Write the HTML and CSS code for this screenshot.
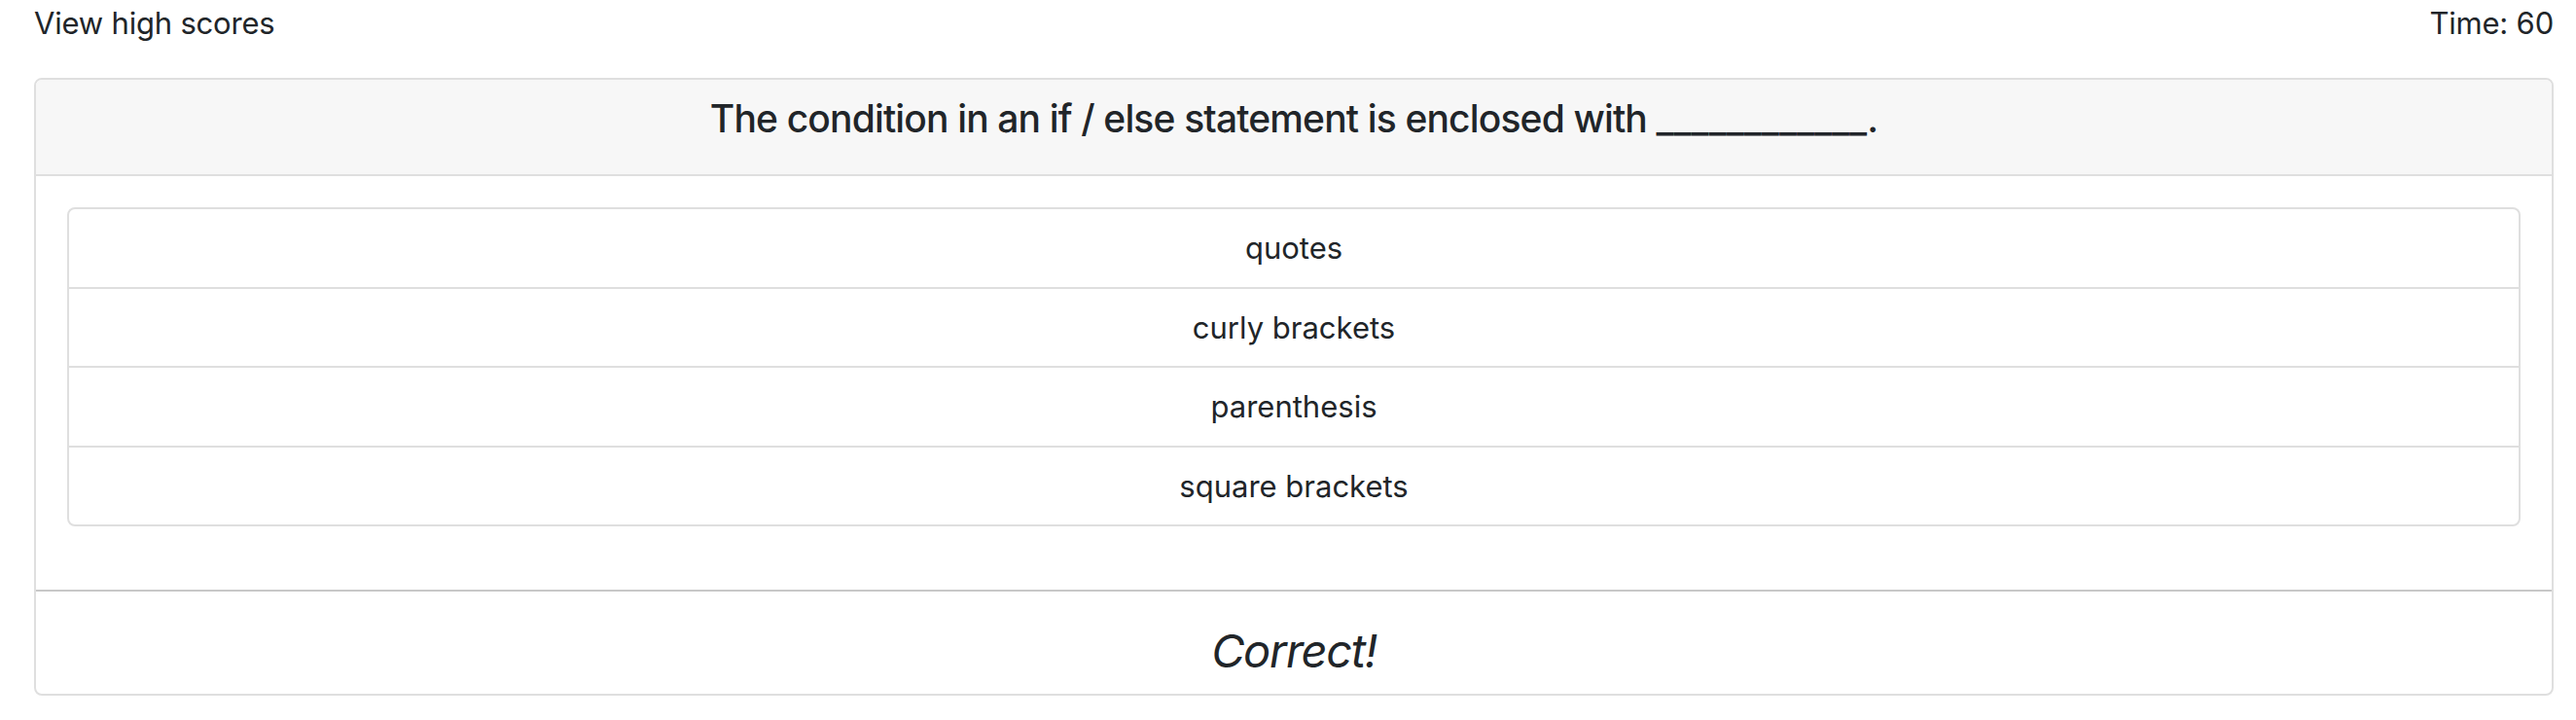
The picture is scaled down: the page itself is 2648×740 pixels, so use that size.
FILE: index.html
```html
<!DOCTYPE html>
<html lang="en">
<head>
<meta charset="utf-8">
<title>Coding Quiz</title>
<link rel="stylesheet" href="styles.css">
</head>
<body>
<div class="page">
  <header class="topbar">
    <a class="scores" href="#">View high scores</a>
    <span class="timer">Time: 60</span>
  </header>
  <main class="card">
    <div class="card-header">
      <h4 class="question">The condition in an if / else statement is enclosed with <span class="blank">____________</span>.</h4>
    </div>
    <div class="card-body">
      <ul class="choices">
        <li class="choice">quotes</li>
        <li class="choice">curly brackets</li>
        <li class="choice">parenthesis</li>
        <li class="choice">square brackets</li>
      </ul>
    </div>
    <div class="card-footer">
      <p class="result">Correct!</p>
    </div>
  </main>
</div>
</body>
</html>
```
FILE: styles.css
```css
html, body {
  margin: 0;
  padding: 0;
  background: #ffffff;
}

body {
  font-family: Inter, "Liberation Sans", sans-serif;
  color: #212529;
}

.page {
  padding: 0 23px 0 35px;
}

.topbar {
  display: flex;
  justify-content: space-between;
  align-items: flex-start;
  font-size: 31px;
  line-height: 48px;
  height: 48px;
  letter-spacing: -0.2px;
}

.scores {
  color: #212529;
  text-decoration: none;
}

.timer {
  color: #212529;
}

.card {
  margin-top: 32px;
  border: 2px solid #dfdfdf;
  border-radius: 8px;
  overflow: hidden;
  background: #ffffff;
}

.card-header {
  background: #f7f7f7;
  border-bottom: 2px solid #dfdfdf;
  padding: 16px 0 33px;
  text-align: center;
}

.question {
  margin: 0;
  font-size: 39px;
  font-weight: 500;
  line-height: 48px;
  letter-spacing: -0.85px;
}

.blank {
  letter-spacing: 0;
}

.card-body {
  padding: 32px 32px 65px;
}

.choices {
  list-style: none;
  margin: 0;
  padding: 0;
  border: 2px solid #dfdfdf;
  border-radius: 8px;
}

.choice {
  padding: 20px;
  font-size: 31px;
  line-height: 39.5px;
  text-align: center;
}

.choice + .choice {
  border-top: 2px solid #dfdfdf;
}

.card-footer {
  border-top: 2px solid #c8c8c8;
  padding: 32px 0 15px;
  text-align: center;
}

.result {
  margin: 0;
  font-size: 47px;
  font-style: italic;
  line-height: 58px;
  letter-spacing: -1.4px;
}
```
